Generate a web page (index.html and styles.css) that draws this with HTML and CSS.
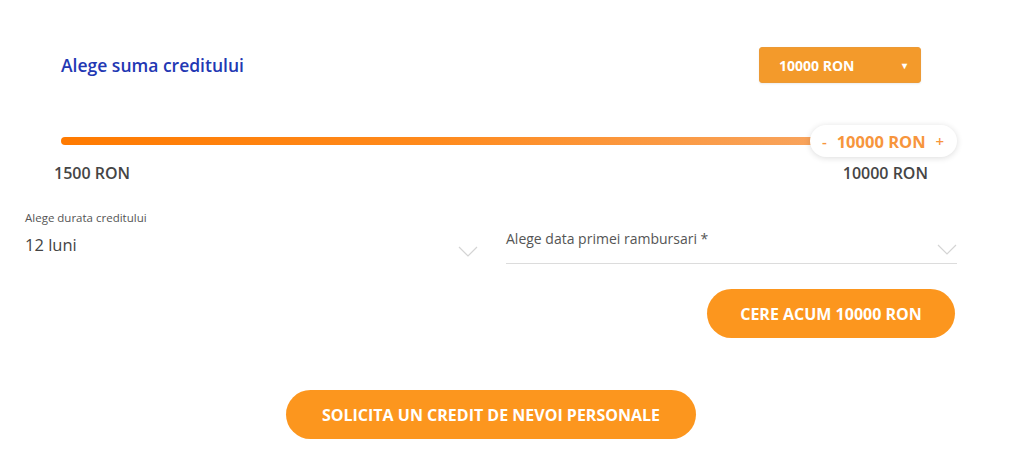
FILE: index.html
```html
<!DOCTYPE html>
<html lang="ro">
<head>
<meta charset="utf-8">
<title>Credit</title>
<link rel="stylesheet" href="styles.css">
</head>
<body>
<div class="calc">
  <div class="top-row">
    <h2 class="title">Alege suma creditului</h2>
    <div class="amount-select">
      <span>10000 RON</span>
      <span class="caret">&#9662;</span>
    </div>
  </div>

  <div class="slider">
    <div class="track"></div>
    <div class="bubble">
      <span class="step">-</span>
      <span class="bubble-value">10000 RON</span>
      <span class="step">+</span>
    </div>
  </div>
  <div class="range-labels">
    <span class="min">1500 RON</span>
    <span class="max">10000 RON</span>
  </div>

  <div class="fields">
    <div class="field field-left">
      <label class="small-label">Alege durata creditului</label>
      <div class="select-line">
        <span class="value">12 luni</span>
        <svg class="chev" width="20" height="12" viewBox="0 0 20 12"><path d="M1 1 L10 10 L19 1" fill="none" stroke="#d4d4d4" stroke-width="1.2"/></svg>
      </div>
    </div>
    <div class="field field-right">
      <div class="select-line underline">
        <span class="placeholder">Alege data primei rambursari *</span>
        <svg class="chev chev-right" width="20" height="12" viewBox="0 0 20 12"><path d="M1 1 L10 10 L19 1" fill="none" stroke="#d4d4d4" stroke-width="1.2"/></svg>
      </div>
    </div>
  </div>

  <div class="cta-row">
    <button class="btn btn-cta">CERE ACUM 10000 RON</button>
  </div>

  <div class="bottom-row">
    <button class="btn btn-wide">SOLICITA UN CREDIT DE NEVOI PERSONALE</button>
  </div>
</div>
</body>
</html>
```

FILE: styles.css
```css
* { box-sizing: border-box; }
html, body { margin: 0; padding: 0; background: #fff; }
body {
  font-family: "Open Sans", "Liberation Sans", sans-serif;
  color: #444;
  width: 1024px;
  height: 456px;
  overflow: hidden;
}
.calc {
  margin-left: 25px;
  width: 932px;
  padding-top: 47px;
}
.top-row {
  display: flex;
  justify-content: space-between;
  align-items: center;
  padding: 0 36px;
}
.title {
  margin: 0;
  font-size: 17.5px;
  font-weight: 600;
  color: #2237b3;
  line-height: 24px;
}
.amount-select {
  width: 162px;
  height: 36px;
  background: #f39a2b;
  border: 1px solid #ec9a35;
  border-radius: 3px;
  display: flex;
  align-items: center;
  justify-content: space-between;
  padding: 0 13px 0 19px;
  color: #fff;
  font-size: 14px;
  font-weight: 700;
  box-shadow: 0 1px 2px rgba(0,0,0,0.08);
}
.caret { font-size: 10px; }

.slider {
  position: relative;
  margin-top: 54px;
  padding-left: 36px;
  height: 8px;
}
.track {
  width: 823px;
  height: 8px;
  border-radius: 4px;
  background: linear-gradient(to right, #ff7a00 0%, #ff8a1c 45%, #f7a868 100%);
}
.bubble {
  position: absolute;
  left: 785px;
  top: -12px;
  width: 147px;
  height: 32px;
  border-radius: 16px;
  background: #fff;
  box-shadow: 0 1px 6px rgba(0,0,0,0.14);
  display: flex;
  align-items: center;
  justify-content: space-between;
  padding: 0 13px 0 12px;
  color: #f7953c;
  font-weight: 700;
}
.bubble-value { font-size: 16.5px; }
.step { font-weight: 600; font-size: 15px; }

.range-labels {
  display: flex;
  justify-content: space-between;
  padding: 0 29px 0 29px;
  margin-top: 17px;
  font-size: 16px;
  font-weight: 600;
  color: #454545;
  line-height: 22px;
}

.fields {
  display: flex;
  justify-content: space-between;
  margin-top: 26px;
}
.field-left { width: 453px; }
.field-right { width: 451px; padding-top: 19px; }
.small-label {
  display: block;
  font-size: 11.5px;
  color: #555;
  line-height: 15px;
}
.select-line {
  display: flex;
  justify-content: space-between;
  align-items: flex-end;
}
.field-left .select-line { margin-top: 9px; }
.value {
  font-size: 16.5px;
  color: #444;
  line-height: 22px;
}
.chev { display: block; margin-bottom: -2px; }
.underline {
  border-bottom: 1px solid #dcdcdc;
  padding-bottom: 7px;
}
.placeholder {
  font-size: 14px;
  color: #555;
  line-height: 19px;
  margin-bottom: 8px;
}
.chev-right { margin-bottom: 0; }

.cta-row {
  display: flex;
  justify-content: flex-end;
  margin-top: 25px;
  padding-right: 2px;
}
.btn {
  border: none;
  border-radius: 25px;
  background: #fc961e;
  color: #fff;
  font-family: "Open Sans", "Liberation Sans", sans-serif;
  font-weight: 700;
  font-size: 16px;
  height: 49px;
  cursor: pointer;
}
.btn-cta { width: 248px; }
.bottom-row {
  display: flex;
  justify-content: center;
  margin-top: 52px;
}
.btn-wide { width: 410px; }
```
